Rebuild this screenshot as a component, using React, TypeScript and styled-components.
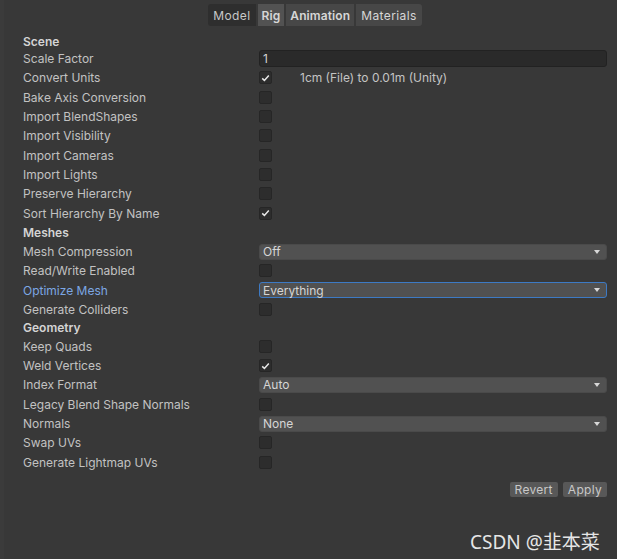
import React from 'react';
import styled, { createGlobalStyle } from 'styled-components';

const GlobalStyle = createGlobalStyle`
  html, body {
    margin: 0;
    padding: 0;
    background: #383838;
  }
  body {
    font-family: Inter, "Noto Sans", "Liberation Sans", sans-serif;
  }
`;

const Page = styled.div`
  position: relative;
  width: 617px;
  height: 559px;
  background: #383838;
  overflow: hidden;
  box-sizing: border-box;
  border-left: 4px solid #3b3b3b;
`;

const TabBar = styled.div`
  display: flex;
  justify-content: center;
  gap: 2px;
  margin-top: 4px;
  padding-left: 9px;
  height: 22px;
`;

const Tab = styled.div<{ $active?: boolean; $bold?: boolean; $tone?: string }>`
  display: flex;
  align-items: center;
  padding: 0 ${(p) => (p.$bold ? 4 : 5)}px;
  height: 22px;
  font-size: 12px;
  letter-spacing: ${(p) => (p.$bold ? 0.1 : 0.4)}px;
  font-weight: ${(p) => (p.$bold ? 600 : 400)};
  color: ${(p) => (p.$active ? '#c8c8c8' : '#d6d6d6')};
  background: ${(p) => p.$tone || '#474747'};
  border-radius: ${(p) => (p.$active ? '3px 0 0 3px' : '0')};
  &:last-child {
    border-radius: 0 3px 3px 0;
  }
`;

const Form = styled.div`
  display: grid;
  grid-template-columns: 236px 1fr;
  margin-top: 7px;
  padding: 0 10px 0 19px;
`;

const Label = styled.div<{ $h?: number; $header?: boolean; $focus?: boolean }>`
  height: ${(p) => p.$h ?? 19.3}px;
  display: flex;
  align-items: center;
  font-size: 12px;
  font-weight: ${(p) => (p.$header ? 600 : 400)};
  color: ${(p) => (p.$focus ? '#7ca7e4' : p.$header ? '#d4d4d4' : '#c2c2c2')};
  white-space: nowrap;
`;

const Cell = styled.div<{ $h?: number }>`
  height: ${(p) => p.$h ?? 19.3}px;
  display: flex;
  align-items: center;
  gap: 28px;
`;

const TextField = styled.div`
  flex: 1;
  height: 17px;
  box-sizing: border-box;
  background: #2a2a2a;
  border: 1px solid #222;
  border-radius: 3px;
  padding: 0 3px;
  display: flex;
  align-items: center;
  font-size: 12px;
  color: #d2d2d2;
`;

const Box = styled.div`
  width: 13px;
  height: 13px;
  box-sizing: border-box;
  background: #2d2d2d;
  border: 1px solid #262626;
  border-radius: 2px;
  display: flex;
  align-items: center;
  justify-content: center;
  flex: none;
`;

const Note = styled.span`
  font-size: 12px;
  color: #c4c4c4;
`;

const Dropdown = styled.div<{ $focus?: boolean }>`
  flex: 1;
  height: 16px;
  box-sizing: border-box;
  background: #515151;
  border: 1px solid ${(p) => (p.$focus ? '#3d7ac4' : '#4a4a4a')};
  border-radius: 3px;
  padding: 0 6px 0 3px;
  display: flex;
  align-items: center;
  justify-content: space-between;
  font-size: 12px;
  color: #d6d6d6;
`;

const Arrow = styled.span`
  width: 0;
  height: 0;
  border-left: 3.5px solid transparent;
  border-right: 3.5px solid transparent;
  border-top: 4px solid #d8d8d8;
`;

const Footer = styled.div`
  display: flex;
  justify-content: flex-end;
  gap: 5px;
  margin-top: 10px;
  padding-right: 10px;
`;

const Button = styled.div`
  height: 15px;
  padding: 0 5px;
  display: flex;
  align-items: center;
  background: #585858;
  border-radius: 2px;
  font-size: 12px;
  letter-spacing: 0.3px;
  color: #c8c8c8;
`;

const Watermark = styled.div`
  position: absolute;
  left: 466px;
  top: 527px;
  font-family: "Noto Sans", "Noto Sans CJK SC", sans-serif;
  font-size: 19px;
  color: #e6e6e6;
  white-space: nowrap;
`;

const Check = () => (
  <svg width="9" height="8" viewBox="0 0 9 8">
    <path d="M1.2 4.4 L3.4 6.4 L7.8 1.4" fill="none" stroke="#e8e8e8" strokeWidth="1.5" />
  </svg>
);

type Row =
  | { kind: 'header'; label: string; h?: number }
  | { kind: 'check'; label: string; checked?: boolean; note?: string }
  | { kind: 'text'; label: string; value: string }
  | { kind: 'drop'; label: string; value: string; focus?: boolean };

const rows: Row[] = [
  { kind: 'header', label: 'Scene', h: 16 },
  { kind: 'text', label: 'Scale Factor', value: '1' },
  { kind: 'check', label: 'Convert Units', checked: true, note: '1cm (File) to 0.01m (Unity)' },
  { kind: 'check', label: 'Bake Axis Conversion' },
  { kind: 'check', label: 'Import BlendShapes' },
  { kind: 'check', label: 'Import Visibility' },
  { kind: 'check', label: 'Import Cameras' },
  { kind: 'check', label: 'Import Lights' },
  { kind: 'check', label: 'Preserve Hierarchy' },
  { kind: 'check', label: 'Sort Hierarchy By Name', checked: true },
  { kind: 'header', label: 'Meshes' },
  { kind: 'drop', label: 'Mesh Compression', value: 'Off' },
  { kind: 'check', label: 'Read/Write Enabled' },
  { kind: 'drop', label: 'Optimize Mesh', value: 'Everything', focus: true },
  { kind: 'check', label: 'Generate Colliders' },
  { kind: 'header', label: 'Geometry', h: 17.6 },
  { kind: 'check', label: 'Keep Quads' },
  { kind: 'check', label: 'Weld Vertices', checked: true },
  { kind: 'drop', label: 'Index Format', value: 'Auto' },
  { kind: 'check', label: 'Legacy Blend Shape Normals' },
  { kind: 'drop', label: 'Normals', value: 'None' },
  { kind: 'check', label: 'Swap UVs' },
  { kind: 'check', label: 'Generate Lightmap UVs' },
];

const renderControl = (row: Row) => {
  switch (row.kind) {
    case 'text':
      return <TextField>{row.value}</TextField>;
    case 'check':
      return (
        <>
          <Box>{row.checked && <Check />}</Box>
          {row.note && <Note>{row.note}</Note>}
        </>
      );
    case 'drop':
      return (
        <Dropdown $focus={row.focus}>
          {row.value}
          <Arrow />
        </Dropdown>
      );
    default:
      return null;
  }
};

const App = () => {
  return (
    <Page>
      <GlobalStyle />
      <TabBar>
        <Tab $active $tone="#2e2e2e">Model</Tab>
        <Tab $bold $tone="#525252">Rig</Tab>
        <Tab $bold $tone="#474747">Animation</Tab>
        <Tab $tone="#474747">Materials</Tab>
      </TabBar>
      <Form>
        {rows.map((row) => {
          const h = row.kind === 'header' ? row.h : undefined;
          return (
            <React.Fragment key={row.label}>
              <Label
                $h={h}
                $header={row.kind === 'header'}
                $focus={row.kind === 'drop' && row.focus}
              >
                {row.label}
              </Label>
              <Cell $h={h}>{renderControl(row)}</Cell>
            </React.Fragment>
          );
        })}
      </Form>
      <Footer>
        <Button>Revert</Button>
        <Button>Apply</Button>
      </Footer>
      <Watermark>CSDN @韭本菜</Watermark>
    </Page>
  );
};

export default App;
